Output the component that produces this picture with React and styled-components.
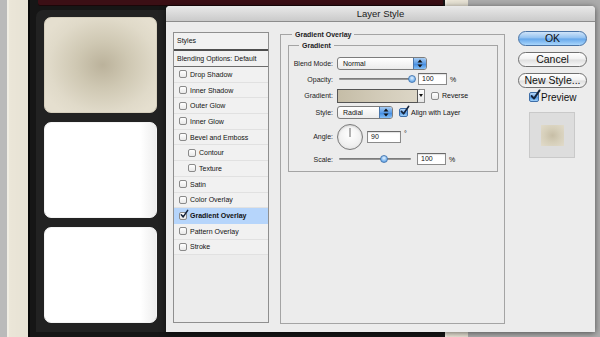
import React from 'react';
import styled, { createGlobalStyle } from 'styled-components';

const Global = createGlobalStyle`
  html, body { margin: 0; padding: 0; }
  body {
    width: 600px; height: 337px; overflow: hidden;
    font-family: "Liberation Sans", Arial, sans-serif;
    color: #111;
  }
`;

const Desktop = styled.div`
  position: relative;
  width: 600px;
  height: 337px;
  display: flex;
  overflow: hidden;
  background: #acacac;
`;

const GrayStrip = styled.div`
  flex: 0 0 ${p => p.$w}px;
  background: ${p => p.$bg || '#b8b8b8'};
`;

const PaperStrip = styled.div`
  flex: 0 0 ${p => p.$w}px;
  background:
    linear-gradient(90deg, rgba(255,255,255,0.3) 0 2px, rgba(255,255,255,0) 2px, rgba(0,0,0,0.02) 100%),
    #ebe6d8;
`;

const DarkColumn = styled.div`
  flex: 0 0 415px;
  border-left: 2px solid #070707;
  background: #161616;
  display: flex;
  flex-direction: column;
`;

const MaroonBar = styled.div`
  height: 5px;
  margin: 0 2px 0 8px;
  background: #3b0f15;
  border-bottom: 1px solid #1a0709;
  border-radius: 0 0 0 3px;
`;

const Tray = styled.div`
  margin: 4px 0 0 6px;
  height: 322px;
  box-sizing: border-box;
  background: #222;
  border-radius: 7px 0 0 0;
  padding: 7px 0 0 8px;
  display: flex;
  flex-direction: column;
  gap: 9px;
`;

const Tile = styled.div`
  width: 113px;
  height: 96px;
  box-sizing: border-box;
  border-radius: 7px;
  background: ${p => p.$tinted
    ? 'radial-gradient(ellipse 60% 62% at 52% 50%, #bbb29b 0%, #cfc8b3 40%, #e0dac9 80%, #e5dfcf 100%)'
    : 'linear-gradient(90deg, #ffffff 0%, #ffffff 86%, #eeeeee 100%)'};
  border: 1px solid ${p => p.$tinted ? '#d6cfbd' : '#f4f4f4'};
`;

/* ---------- dialog ---------- */

const Dialog = styled.div`
  position: absolute;
  left: 166px;
  top: 6px;
  width: 429px;
  height: 326px;
  background: #ececec;
  border-radius: 4px 4px 0 0;
  box-shadow: 0 1px 6px rgba(0,0,0,0.55);
  display: flex;
  flex-direction: column;
`;

const TitleBar = styled.div`
  height: 15px;
  border-bottom: 1px solid #8c8c8c;
  border-radius: 4px 4px 0 0;
  background: linear-gradient(#e9e9e9, #cacaca);
  font-size: 9.5px;
  line-height: 15px;
  text-align: center;
  color: #202020;
`;

const Body = styled.div`
  flex: 1;
  display: flex;
  align-items: flex-start;
  padding: 10px 8px 0 7px;
`;

const StyleList = styled.div`
  width: 96px;
  height: 291px;
  box-sizing: border-box;
  border: 1px solid #8f8f8f;
  background: #ececec;
  display: flex;
  flex-direction: column;
  font-size: 7px;
`;

const ListHeader = styled.div`
  height: ${p => p.$h}px;
  line-height: ${p => p.$h}px;
  padding-left: 3px;
  background: #f1f1f1;
  border-bottom: ${p => p.$thick ? '2px solid #4e4e4e' : '1px solid #6c6c6c'};
`;

const ListRow = styled.div`
  height: 15.7px;
  box-sizing: border-box;
  display: flex;
  align-items: center;
  padding-left: ${p => p.$indent ? 14 : 5}px;
  background: ${p => p.$selected ? '#b6d5fb' : '#f1f1f1'};
  border-bottom: 1px solid ${p => p.$selected ? '#b6d5fb' : '#e1e1e1'};
  font-weight: ${p => p.$selected ? 'bold' : 'normal'};
`;

const RowText = styled.span`
  margin-left: 3px;
  white-space: nowrap;
`;

const BoxWrap = styled.span`
  position: relative;
  flex: 0 0 auto;
  width: ${p => p.$size}px;
  height: ${p => p.$size}px;
  box-sizing: border-box;
  border-radius: 2px;
  border: 1px solid ${p => p.$aqua ? '#3e6ea8' : '#8a8a8a'};
  background: ${p => p.$aqua
    ? 'linear-gradient(#b5d6f7, #6fa9ea 50%, #4f95e2 51%, #9fd0fa)'
    : 'linear-gradient(#ffffff, #e8e8e8)'};
`;

const CheckSvg = styled.svg`
  position: absolute;
  left: 0px;
  top: -3px;
  overflow: visible;
`;

function Check({ checked, aqua, size = 8 }) {
  return (
    <BoxWrap $aqua={aqua} $size={size}>
      {checked && (
        <CheckSvg width={size} height={size} viewBox="0 0 10 10">
          <path d="M1.6 6 L4 8.6 L9.6 0.4" fill="none" stroke="#14233a" strokeWidth="1.9" strokeLinecap="round" strokeLinejoin="round" />
        </CheckSvg>
      )}
    </BoxWrap>
  );
}

const Middle = styled.div`
  margin: -2px 0 0 11px;
`;

const Group = styled.fieldset`
  margin: 0;
  min-width: 0;
  box-sizing: border-box;
  width: ${p => p.$w}px;
  ${p => p.$h ? `height: ${p.$h}px;` : ''}
  padding: ${p => p.$pad};
  border: 1px solid #a4a4a4;
`;

const Legend = styled.legend`
  font-size: 7px;
  line-height: 9px;
  font-weight: bold;
  padding: 0 3px;
  margin-left: ${p => p.$ml}px;
  color: #1c1c1c;
`;

const FormRow = styled.div`
  display: flex;
  align-items: center;
  height: ${p => p.$h}px;
  font-size: 7px;
`;

const Label = styled.span`
  width: 44px;
  margin-right: 4px;
  text-align: right;
  color: #222;
  white-space: nowrap;
`;

const Select = styled.div`
  width: ${p => p.$w}px;
  height: 13px;
  box-sizing: border-box;
  border: 1px solid #7c7c7c;
  border-radius: 3px;
  background: linear-gradient(#ffffff, #ebebeb);
  display: flex;
  align-items: center;
  overflow: hidden;
  font-size: 7px;
`;

const SelectText = styled.span`
  padding-left: 5px;
`;

const Stepper = styled.span`
  margin-left: auto;
  width: 12px;
  height: 100%;
  border-left: 1px solid #4a76aa;
  background: linear-gradient(#a8cdf3, #5b9ce6 50%, #3c86dd 51%, #86c0f6);
  display: flex;
  align-items: center;
  justify-content: center;
`;

function Arrows() {
  return (
    <svg width="6" height="9" viewBox="0 0 6 9">
      <path d="M3 0.5 L5.5 3.5 L0.5 3.5 Z" fill="#111" />
      <path d="M3 8.5 L5.5 5.5 L0.5 5.5 Z" fill="#111" />
    </svg>
  );
}

const SliderBox = styled.div`
  position: relative;
  width: ${p => p.$w}px;
  height: 10px;
  margin-left: 2px;
`;

const Track = styled.div`
  position: absolute;
  left: 0;
  right: 0;
  top: 4px;
  height: 2px;
  border-radius: 1px;
  background: linear-gradient(#6f6f6f, #a4a4a4);
`;

const Thumb = styled.div`
  position: absolute;
  top: 1px;
  width: 8px;
  height: 8px;
  margin-left: -4px;
  border-radius: 50%;
  box-sizing: border-box;
  border: 1px solid #4c7cb3;
  background: radial-gradient(circle at 50% 35%, #e4f2ff, #7db6ee 60%, #4b93e0);
`;

function Slider({ w, value }) {
  return (
    <SliderBox $w={w}>
      <Track />
      <Thumb style={{ left: `${value}%` }} />
    </SliderBox>
  );
}

const Field = styled.div`
  width: ${p => p.$w}px;
  height: 12px;
  box-sizing: border-box;
  margin-left: ${p => p.$ml}px;
  border: 1px solid #8b8b8b;
  border-top-color: #6a6a6a;
  background: #fff;
  box-shadow: inset 0 1px 1px rgba(0,0,0,0.12);
  font-size: 7px;
  line-height: 10px;
  padding-left: 3px;
`;

const Unit = styled.span`
  margin-left: 3px;
  align-self: ${p => p.$sup ? 'flex-start' : 'center'};
  ${p => p.$sup ? 'margin-top: 10px;' : ''}
`;

const Swatch = styled.div`
  width: 81px;
  height: 14px;
  box-sizing: border-box;
  border: 1px solid #555;
  background: linear-gradient(90deg, #c5bda7, #d4cdbb 60%, #dcd6c6);
`;

const SwatchDrop = styled.div`
  width: 7px;
  height: 14px;
  box-sizing: border-box;
  border: 1px solid #8a8a8a;
  border-left: none;
  background: linear-gradient(#fff, #e6e6e6);
  display: flex;
  align-items: center;
  justify-content: center;
`;

const Spacer = styled.span`
  display: inline-block;
  width: ${p => p.$w}px;
`;

const Dial = styled.div`
  width: 26px;
  height: 26px;
  box-sizing: border-box;
  border-radius: 50%;
  border: 1px solid #7a7a7a;
  background: radial-gradient(circle at 50% 40%, #ffffff, #f0f0f0 60%, #d8d8d8);
  box-shadow: inset 0 1px 2px rgba(0,0,0,0.15);
  display: flex;
  align-items: center;
  justify-content: center;
`;

const Buttons = styled.div`
  margin: -1px 0 0 13px;
  width: 69px;
  display: flex;
  flex-direction: column;
  gap: 6px;
`;

const Button = styled.div`
  height: 15px;
  box-sizing: border-box;
  border-radius: 8px;
  border: 1px solid ${p => p.$primary ? '#4a74a6' : '#707070'};
  background: ${p => p.$primary
    ? 'linear-gradient(#cfe4f9, #8fc0f0 48%, #64a6ea 52%, #a9d6fc)'
    : 'linear-gradient(#ffffff, #f1f1f1 48%, #dfdfdf 52%, #f7f7f7)'};
  font-size: 10.5px;
  line-height: 13px;
  text-align: center;
  color: #111;
  white-space: nowrap;
`;

const PreviewRow = styled.div`
  display: flex;
  align-items: center;
  height: 10px;
  margin-top: -2px;
  padding-left: 11px;
  font-size: 10px;
`;

const PreviewText = styled.span`
  margin-left: 2px;
`;

const PreviewBox = styled.div`
  margin: 4px 0 0 11px;
  width: 46px;
  height: 46px;
  box-sizing: border-box;
  border: 1px solid #c9c9c9;
  background: #dddddd;
  display: flex;
  align-items: center;
  justify-content: center;
`;

const PreviewSquare = styled.div`
  width: 23px;
  height: 21px;
  background: radial-gradient(ellipse at 50% 50%, #c7bea6 0%, #d6cfba 50%, #e1dbca 100%);
`;

const effects = [
  { name: 'Drop Shadow' },
  { name: 'Inner Shadow' },
  { name: 'Outer Glow' },
  { name: 'Inner Glow' },
  { name: 'Bevel and Emboss' },
  { name: 'Contour', indent: true },
  { name: 'Texture', indent: true },
  { name: 'Satin' },
  { name: 'Color Overlay' },
  { name: 'Gradient Overlay', selected: true },
  { name: 'Pattern Overlay' },
  { name: 'Stroke' },
];

export default function App() {
  return (
    <>
      <Global />
      <Desktop>
        <GrayStrip $w={7} $bg="#bababa" />
        <PaperStrip $w={21} />
        <DarkColumn>
          <MaroonBar />
          <Tray>
            <Tile $tinted />
            <Tile />
            <Tile />
          </Tray>
        </DarkColumn>
        <PaperStrip $w={23} />
        <GrayStrip $w={132} $bg="#acacac" />

        <Dialog>
          <TitleBar>Layer Style</TitleBar>
          <Body>
            <StyleList>
              <ListHeader $h={16} $thick>Styles</ListHeader>
              <ListHeader $h={15}>Blending Options: Default</ListHeader>
              {effects.map(e => (
                <ListRow key={e.name} $indent={e.indent} $selected={e.selected}>
                  <Check checked={e.selected} />
                  <RowText>{e.name}</RowText>
                </ListRow>
              ))}
            </StyleList>

            <Middle>
              <Group $w={225} $h={294} $pad="2px 7px 0 7px">
                <Legend $ml={4}>Gradient Overlay</Legend>
                <Group $w={210} $pad="5px 0 6px 0">
                  <Legend $ml={10}>Gradient</Legend>
                  <FormRow $h={16}>
                    <Label>Blend Mode:</Label>
                    <Select $w={90}>
                      <SelectText>Normal</SelectText>
                      <Stepper><Arrows /></Stepper>
                    </Select>
                  </FormRow>
                  <FormRow $h={16}>
                    <Label>Opacity:</Label>
                    <Slider w={73} value={100} />
                    <Field $w={29} $ml={6}>100</Field>
                    <Unit>%</Unit>
                  </FormRow>
                  <FormRow $h={17}>
                    <Label>Gradient:</Label>
                    <Swatch />
                    <SwatchDrop>
                      <svg width="4" height="3" viewBox="0 0 4 3"><path d="M0 0 H4 L2 3 Z" fill="#111" /></svg>
                    </SwatchDrop>
                    <Spacer $w={6} />
                    <Check />
                    <RowText>Reverse</RowText>
                  </FormRow>
                  <FormRow $h={16}>
                    <Label>Style:</Label>
                    <Select $w={56}>
                      <SelectText>Radial</SelectText>
                      <Stepper><Arrows /></Stepper>
                    </Select>
                    <Spacer $w={6} />
                    <Check checked aqua size={9} />
                    <RowText>Align with Layer</RowText>
                  </FormRow>
                  <FormRow $h={33}>
                    <Label>Angle:</Label>
                    <Dial>
                      <svg width="24" height="24" viewBox="0 0 24 24">
                        <line x1="12" y1="12" x2="12" y2="3" stroke="#666" strokeWidth="1" />
                      </svg>
                    </Dial>
                    <Field $w={34} $ml={4}>90</Field>
                    <Unit $sup>°</Unit>
                  </FormRow>
                  <FormRow $h={12}>
                    <Label>Scale:</Label>
                    <Slider w={72} value={62} />
                    <Field $w={29} $ml={6}>100</Field>
                    <Unit>%</Unit>
                  </FormRow>
                </Group>
              </Group>
            </Middle>

            <Buttons>
              <Button $primary>OK</Button>
              <Button>Cancel</Button>
              <Button>New Style...</Button>
              <PreviewRow>
                <Check checked aqua size={10} />
                <PreviewText>Preview</PreviewText>
              </PreviewRow>
              <PreviewBox>
                <PreviewSquare />
              </PreviewBox>
            </Buttons>
          </Body>
        </Dialog>
      </Desktop>
    </>
  );
}
